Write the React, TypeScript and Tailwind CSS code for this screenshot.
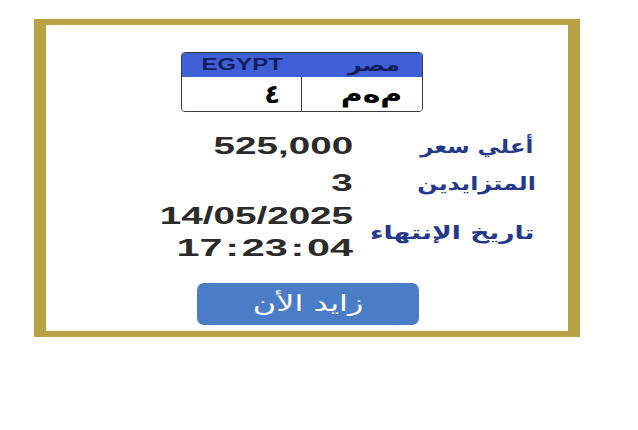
const latin = { fontFamily: '"Liberation Sans", Arial, sans-serif' };
const arabic = { fontFamily: '"DejaVu Sans", "Liberation Sans", sans-serif' };

const InfoValue = ({
  children,
  stretch = "scale-x-[1.68]",
}: {
  children: React.ReactNode;
  stretch?: string;
}) => (
  <span
    className={`inline-block origin-right text-[23px] font-bold leading-[32px] text-[#2b2b2b] ${stretch}`}
    style={latin}
  >
    {children}
  </span>
);

const InfoLabel = ({
  children,
  stretch,
}: {
  children: React.ReactNode;
  stretch: string;
}) => (
  <span
    dir="rtl"
    className={`inline-block origin-right text-[19px] font-bold leading-[32px] text-[#25398a] ${stretch}`}
    style={arabic}
  >
    {children}
  </span>
);

// colons in the time sit a little wider apart than the digits
const Colon = () => <span className="mx-[1.5px]">:</span>;

export default function App() {
  return (
    <div className="h-[430px] w-[638px] bg-white pl-[34px] pt-[19px]">
      {/* gold frame */}
      <div className="flex h-[318px] w-[546px] flex-col border-x-[12px] border-y-[6px] border-[#b8a245] bg-white pt-[27px]">
        {/* plate */}
        <div className="ml-[135px] flex h-[60px] w-[242px] flex-col overflow-hidden rounded-[4px] border-[1.5px] border-[#3a3a3a]">
          <div className="flex h-[24px] items-center bg-[#3f5fd6]">
            <div className="flex w-1/2 justify-center">
              <span
                className="inline-block scale-x-[1.5] text-[16px] font-bold leading-none text-[#121d5c]"
                style={latin}
              >
                EGYPT
              </span>
            </div>
            <div className="flex w-1/2 justify-end pr-[22px]">
              <span
                dir="rtl"
                className="inline-block origin-right scale-x-[1.3] text-[18px] font-bold leading-none text-[#121d5c]"
                style={arabic}
              >
                مصر
              </span>
            </div>
          </div>
          <div className="flex flex-1 bg-white">
            <div className="flex w-1/2 items-center justify-end border-r-[1.5px] border-[#3a3a3a] pr-[21px]">
              <span className="text-[26px] font-bold leading-none text-black" style={arabic}>
                ٤
              </span>
            </div>
            <div className="flex w-1/2 items-center justify-end pr-[20px]">
              <span
                dir="rtl"
                className="inline-block origin-right scale-x-[1.25] text-[24px] font-bold leading-none text-black"
                style={arabic}
              >
                م‌ه‌م
              </span>
            </div>
          </div>
        </div>

        {/* details */}
        <div className="mt-[18px] flex flex-col">
          <div className="flex h-[32px] items-center">
            <div className="w-[307px] text-right">
              <InfoValue>525,000</InfoValue>
            </div>
            <div className="w-[180px] text-right">
              <InfoLabel stretch="scale-x-[1.2]">أعلي سعر</InfoLabel>
            </div>
          </div>
          <div className="mt-[5px] flex h-[32px] items-center">
            <div className="w-[307px] text-right">
              <InfoValue>3</InfoValue>
            </div>
            <div className="w-[183px] text-right">
              <InfoLabel stretch="scale-x-[1.25]">المتزايدين</InfoLabel>
            </div>
          </div>
          <div className="mt-[1px] flex h-[64px] items-center">
            <div className="flex w-[307px] flex-col items-end">
              <InfoValue>14/05/2025</InfoValue>
              <InfoValue stretch="scale-x-[1.8]">
                17<Colon />23<Colon />04
              </InfoValue>
            </div>
            <div className="w-[182px] text-right">
              <InfoLabel stretch="scale-x-[1.4]">تاريخ الإنتهاء</InfoLabel>
            </div>
          </div>
        </div>

        {/* bid button */}
        <button className="ml-[151px] mt-[19px] flex h-[42px] w-[222px] items-center justify-center rounded-[7px] bg-[#4b7dc7]">
          <span
            dir="rtl"
            className="inline-block scale-x-[1.45] text-[22px] leading-none text-white"
            style={arabic}
          >
            زايد الأن
          </span>
        </button>
      </div>
    </div>
  );
}
